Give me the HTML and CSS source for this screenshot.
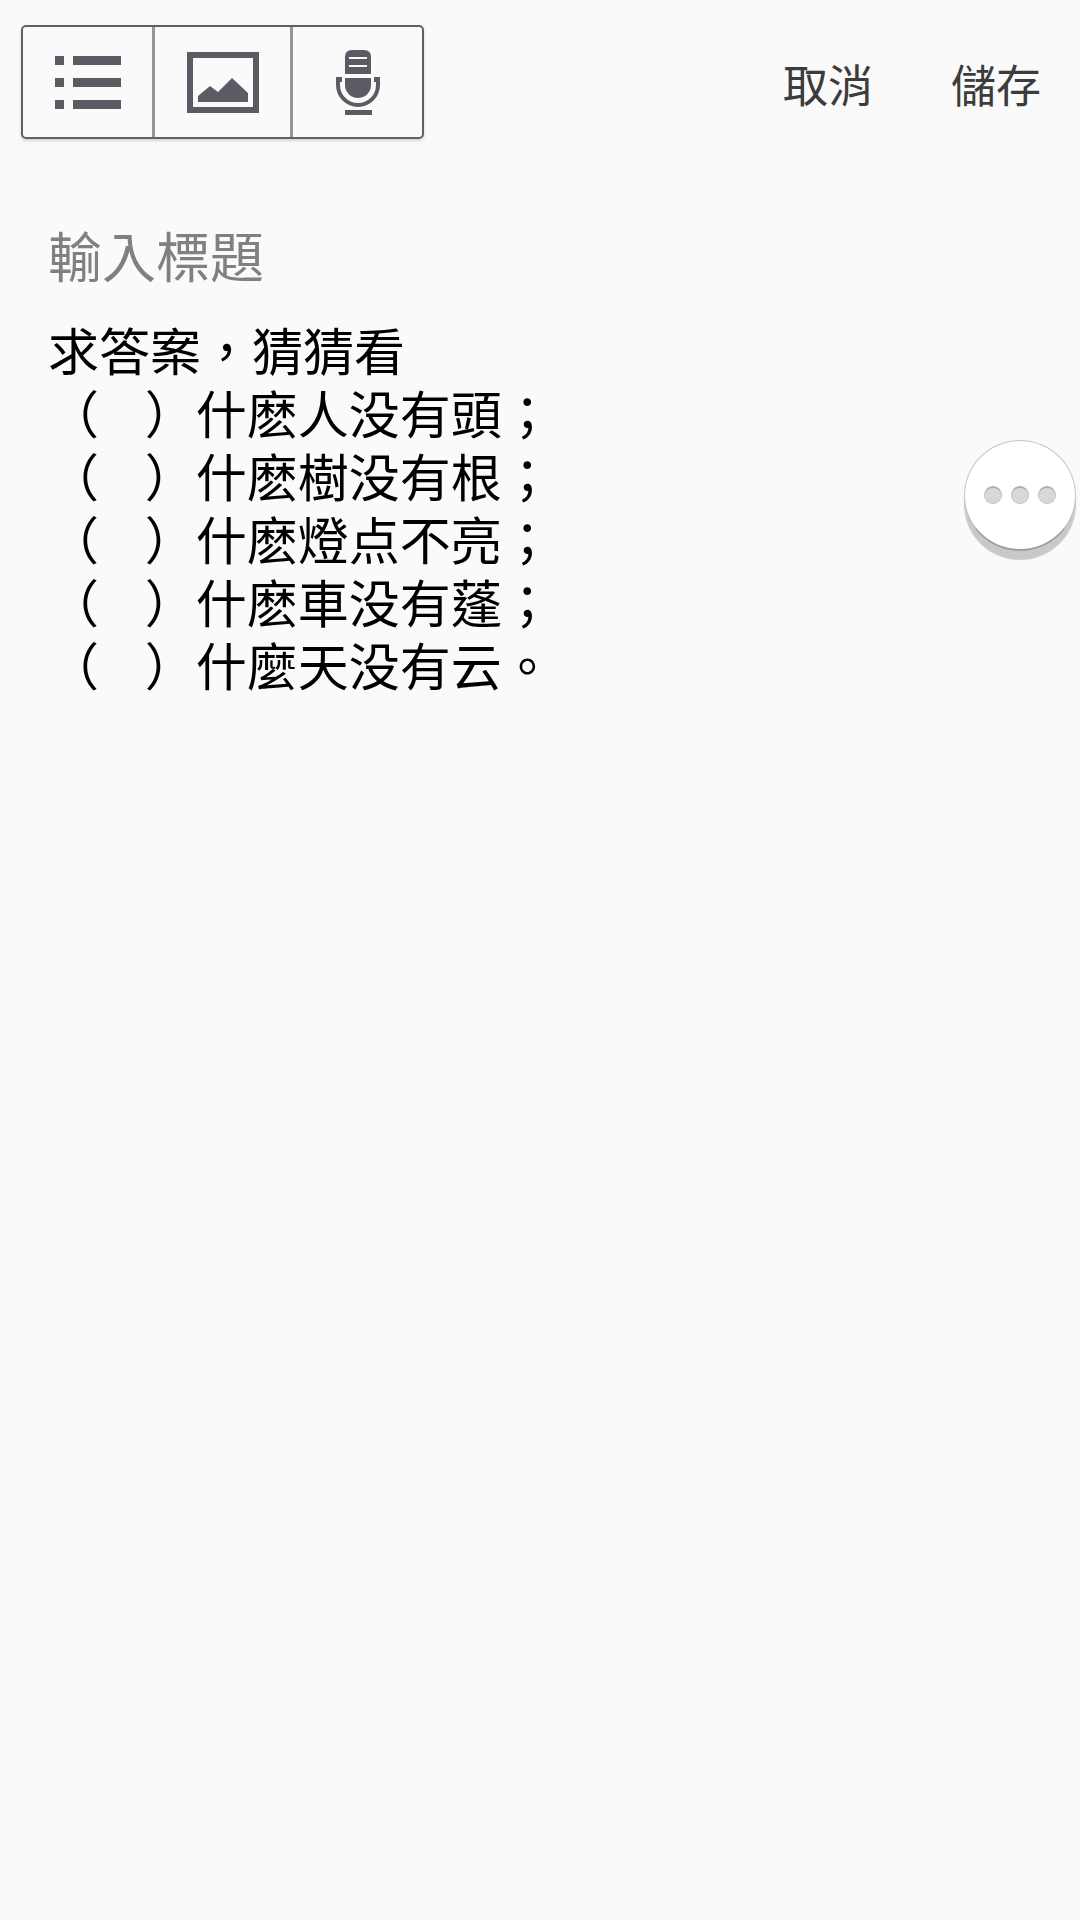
FILE: index.html
```
<!DOCTYPE html>
<html lang="zh-Hant">
<head>
  <meta charset="UTF-8" />
  <meta name="viewport" content="width=device-width, initial-scale=1" />
  <title>備忘錄</title>
  <link rel="stylesheet" href="styles.css">
</head>
<body>
  <header class="toolbar">
    <div class="tools">
      <button class="tool" type="button" aria-label="清單">
        <svg width="66" height="53" viewBox="0 0 66 53" fill="#5b5b63">
          <path d="M0 0h9v9H0zM18 0h48v9H18zM0 22h9v9H0zM18 22h48v9H18zM0 44h9v9H0zM18 44h48v9H18z" />
        </svg>
      </button>
      <button class="tool" type="button" aria-label="圖片">
        <svg width="72" height="61" viewBox="0 0 72 61" fill="#5b5b63">
          <path fill-rule="evenodd" d="M0 0h72v61H0zM6 6v49h60V6z" />
          <path d="M11 50v-6l12-10 8 6 14-14 16 15v9z" />
        </svg>
      </button>
      <button class="tool" type="button" aria-label="錄音">
        <svg width="44" height="65" viewBox="0 0 44 65" fill="#5b5b63">
          <path fill-rule="evenodd" d="M9 24V7q0-7 7-7h12q7 0 7 7v17zM13 7v2h18V7zM13 15v2h18v-2z" />
          <path d="M9 28h26v7a13 13 0 0 1-26 0z" />
          <path d="M0 27h6v5H4v3a18 18 0 0 0 36 0v-3h-2v-5h6v8a22 22 0 0 1-44 0z" />
          <path d="M9 60h27v5H9z" />
        </svg>
      </button>
    </div>
    <div class="actions">
      <button class="action" type="button">取消</button>
      <button class="action" type="button">儲存</button>
    </div>
  </header>

  <main class="note">
    <input class="note-title" type="text" placeholder="輸入標題" aria-label="標題" />
    <textarea class="note-body" aria-label="內容" rows="6" spellcheck="false">求答案，猜猜看
（    ）什麽人没有頭；
（    ）什麽樹没有根；
（    ）什麽燈点不亮；
（    ）什麽車没有蓬；
（    ）什麼天没有云。</textarea>
  </main>

  <button class="more" type="button" aria-label="更多">
    <span class="dot"></span>
    <span class="dot"></span>
    <span class="dot"></span>
  </button>
</body>
</html>
```
FILE: styles.css
```
* {
  box-sizing: border-box;
}
body {
  margin: 0;
  min-height: 100vh;
  background: #fafafa;
  color: #000;
  font-family: "Noto Sans CJK TC", sans-serif;
}
button, input, textarea {
  margin: 0;
  padding: 0;
  border: 0;
  outline: 0;
  background: none;
  color: inherit;
  font-family: inherit;
}
.toolbar {
  display: flex;
  justify-content: space-between;
  align-items: center;
  padding: 25px 39px 0 21px;
}
.tools {
  display: flex;
  border: 2px solid #57656b;
  border-radius: 5px;
  box-shadow: 0 2px 3px rgba(0, 0, 0, 0.15);
}
.tool {
  display: flex;
  justify-content: center;
  align-items: center;
  width: 129px;
  height: 110px;
}
.tool + .tool {
  width: 138px;
  border-left: 3px solid #96969a;
}
.tool:last-child {
  width: 132px;
}
.actions {
  display: flex;
  gap: 78px;
  padding-top: 4px;
}
.action {
  color: #3c3c3c;
  font-size: 45px;
  line-height: 60px;
}
.note {
  padding: 75px 48px 0;
}
.note-title {
  display: block;
  width: 100%;
  height: 80px;
  font-size: 54px;
}
.note-title::placeholder {
  color: #808080;
  opacity: 1;
}
.note-body {
  display: block;
  width: 100%;
  margin-top: 24px;
  font-size: 51px;
  line-height: 63px;
  resize: none;
  overflow: hidden;
}
.more {
  position: absolute;
  top: 440px;
  right: 4px;
  display: flex;
  justify-content: center;
  align-items: center;
  gap: 9px;
  width: 112px;
  height: 111px;
  border: 1px solid #c4c4c4;
  border-bottom: 2px solid #a0a0a0;
  border-radius: 50%;
  background: #fff;
  box-shadow: 0 9px 1px #c9c9c9;
}
.dot {
  width: 18px;
  height: 18px;
  border: 1px solid #c4c4c4;
  border-top: 2px solid #b0b0b0;
  border-radius: 50%;
  background: #d8d8d8;
}
```
